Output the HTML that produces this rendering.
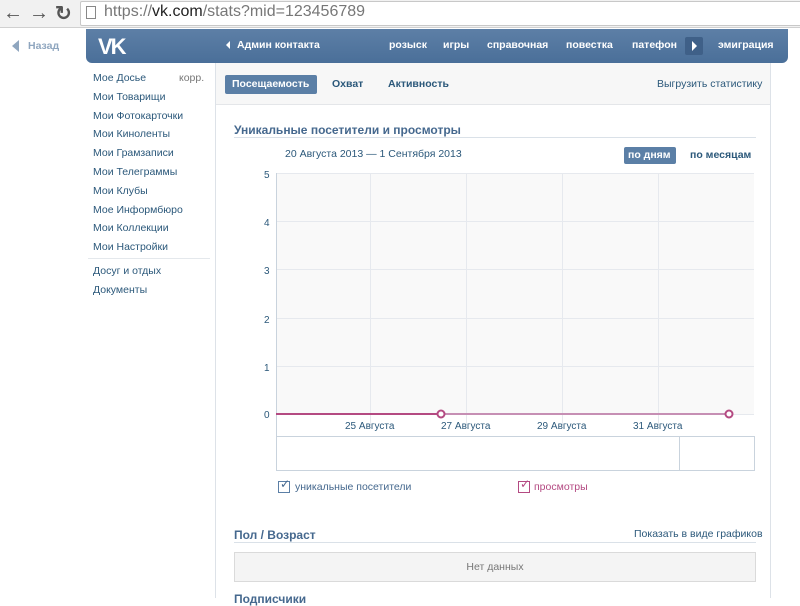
<!DOCTYPE html>
<html><head><meta charset="utf-8"><style>
*{margin:0;padding:0;box-sizing:border-box}
body{width:800px;height:598px;overflow:hidden;background:#fff;font-family:"Liberation Sans",sans-serif;font-size:10.5px;color:#2b587a;position:relative}
.a{position:absolute;white-space:nowrap}
.b{font-weight:bold}
</style></head><body>
<div class="a" style="left:0;top:0;width:800px;height:28px;background:#f1f1f1;border-bottom:1px solid #d0d0d0"></div>
<div class="a" style="left:3px;top:2px;font-size:20px;color:#555;font-weight:bold">&#8592;</div>
<div class="a" style="left:29px;top:2px;font-size:20px;color:#555;font-weight:bold">&#8594;</div>
<div class="a" style="left:55px;top:1px;font-size:20px;color:#555;font-weight:bold">&#8635;</div>
<div class="a" style="left:80px;top:1px;width:722px;height:25px;background:#fff;border:1px solid #c8c8c8;border-radius:2px"></div>
<div class="a" style="left:86px;top:6px;width:10px;height:13px;border:1px solid #888"></div>
<div class="a" style="left:104px;top:3px;font-size:16px;color:#777">https://<span style="color:#222">vk.com</span>/stats?mid=123456789</div>
<div class="a" style="left:12px;top:40px;width:0;height:0;border-top:6px solid transparent;border-bottom:6px solid transparent;border-right:7px solid #8fa6bf"></div>
<div class="a b" style="left:28px;top:40px;color:#8fa6bf">Назад</div>
<div class="a" style="left:86px;top:29px;width:702px;height:34px;background:linear-gradient(#5d7fa6,#4a6f99);border-radius:0 0 6px 6px"></div>
<div class="a b" style="left:98px;top:34px;font-size:22px;color:#fff;letter-spacing:-2px">VK</div>
<div class="a" style="left:226px;top:41px;width:0;height:0;border-top:4px solid transparent;border-bottom:4px solid transparent;border-right:4px solid #fff"></div>
<div class="a b" style="left:237px;top:39px;color:#fff">Админ контакта</div>
<div class="a b" style="left:389px;top:39px;color:#fff">розыск</div>
<div class="a b" style="left:443px;top:39px;color:#fff">игры</div>
<div class="a b" style="left:487px;top:39px;color:#fff">справочная</div>
<div class="a b" style="left:566px;top:39px;color:#fff">повестка</div>
<div class="a b" style="left:632px;top:39px;color:#fff">патефон</div>
<div class="a" style="left:685px;top:37px;width:18px;height:18px;background:#3f6088;border-radius:2px"></div>
<div class="a" style="left:692px;top:41px;width:0;height:0;border-top:5px solid transparent;border-bottom:5px solid transparent;border-left:5px solid #fff"></div>
<div class="a b" style="left:718px;top:39px;color:#fff">эмиграция</div>
<div class="a" style="left:93px;top:69px;line-height:18.8px;color:#2b587a">Мое Досье<br>Мои Товарищи<br>Мои Фотокарточки<br>Мои Киноленты<br>Мои Грамзаписи<br>Мои Телеграммы<br>Мои Клубы<br>Мое Информбюро<br>Мои Коллекции<br>Мои Настройки</div>
<div class="a" style="left:179px;top:72px;color:#777">корр.</div>
<div class="a" style="left:88px;top:258px;width:122px;height:1px;background:#e4e8ec"></div>
<div class="a" style="left:93px;top:262px;line-height:19px">Досуг и отдых<br>Документы</div>
<div class="a" style="left:215px;top:63px;width:1px;height:535px;background:#dde2e8"></div>
<div class="a" style="left:770px;top:63px;width:1px;height:535px;background:#dde2e8"></div>
<div class="a" style="left:216px;top:63px;width:554px;height:42px;background:#f7f7f7;border-bottom:1px solid #e4e6e9"></div>
<div class="a b" style="left:225px;top:75px;width:92px;height:19px;background:#5b7fa6;border-radius:2px;color:#fff;padding:3px 0 0 7px">Посещаемость</div>
<div class="a b" style="left:332px;top:78px">Охват</div>
<div class="a b" style="left:388px;top:78px">Активность</div>
<div class="a" style="left:657px;top:78px">Выгрузить статистику</div>
<div class="a b" style="left:234px;top:123px;font-size:12px;color:#45688e">Уникальные посетители и просмотры</div>
<div class="a" style="left:234px;top:137px;width:522px;height:1px;background:#dae1e8"></div>
<div class="a" style="left:285px;top:148px;color:#2b587a">20 Августа 2013 &#8212; 1 Сентября 2013</div>
<div class="a b" style="left:624px;top:147px;width:52px;height:17px;background:#5b7fa6;border-radius:2px;color:#fff;padding:2px 0 0 4px">по дням</div>
<div class="a b" style="left:690px;top:149px">по месяцам</div>
<svg class="a" style="left:260px;top:165px" width="500" height="310">
<rect x="16" y="8" width="478" height="241" fill="#f9f9f9"/>
<g stroke="#e6e9ee" stroke-width="1">
<line x1="16" y1="8.5" x2="494" y2="8.5"/><line x1="16" y1="56.5" x2="494" y2="56.5"/><line x1="16" y1="104.5" x2="494" y2="104.5"/><line x1="16" y1="153.5" x2="494" y2="153.5"/><line x1="16" y1="201.5" x2="494" y2="201.5"/><line x1="16" y1="249.5" x2="494" y2="249.5"/>
<line x1="110.5" y1="8" x2="110.5" y2="260"/><line x1="206.5" y1="8" x2="206.5" y2="260"/><line x1="302.5" y1="8" x2="302.5" y2="260"/><line x1="398.5" y1="8" x2="398.5" y2="260"/>
</g>
<line x1="16.5" y1="8" x2="16.5" y2="306" stroke="#c9d3dd"/>
<rect x="16.5" y="271.5" width="478" height="34" fill="#fff" stroke="#c9d3dd"/>
<line x1="419.5" y1="271" x2="419.5" y2="306" stroke="#c9d3dd"/>
<g font-family="Liberation Sans" font-size="10" fill="#2b587a">
<text x="4" y="13">5</text><text x="4" y="61">4</text><text x="4" y="109">3</text><text x="4" y="158">2</text><text x="4" y="206">1</text><text x="4" y="253">0</text>
<text x="85" y="264">25 Августа</text><text x="181" y="264">27 Августа</text><text x="277" y="264">29 Августа</text><text x="373" y="264">31 Августа</text>
</g>
<line x1="16" y1="249" x2="181" y2="249" stroke="#b44a82" stroke-width="2"/>
<line x1="181" y1="249" x2="469" y2="249" stroke="#c68fb4" stroke-width="2"/>
<circle cx="181" cy="249" r="3.5" fill="#fff" stroke="#b44a82" stroke-width="2"/>
<circle cx="469" cy="249" r="3.5" fill="#fff" stroke="#b44a82" stroke-width="2"/>
</svg>
<div class="a" style="left:278px;top:481px;width:12px;height:12px;border:1px solid #5b7fa6"></div>
<div class="a" style="left:280px;top:477px;font-size:12px;color:#45688e">&#10003;</div>
<div class="a" style="left:295px;top:481px;color:#45688e">уникальные посетители</div>
<div class="a" style="left:518px;top:481px;width:12px;height:12px;border:1px solid #b44a82"></div>
<div class="a" style="left:520px;top:477px;font-size:12px;color:#b44a82">&#10003;</div>
<div class="a" style="left:534px;top:481px;color:#b44a82">просмотры</div>
<div class="a b" style="left:234px;top:528px;font-size:12px;color:#45688e">Пол / Возраст</div>
<div class="a" style="left:634px;top:528px">Показать в виде графиков</div>
<div class="a" style="left:234px;top:542px;width:522px;height:1px;background:#dae1e8"></div>
<div class="a" style="left:234px;top:552px;width:522px;height:30px;background:#f4f4f4;border:1px solid #dadada;text-align:center;padding-top:8px;color:#777">Нет данных</div>
<div class="a b" style="left:234px;top:592px;font-size:12px;color:#45688e">Подписчики</div>
</body></html>
